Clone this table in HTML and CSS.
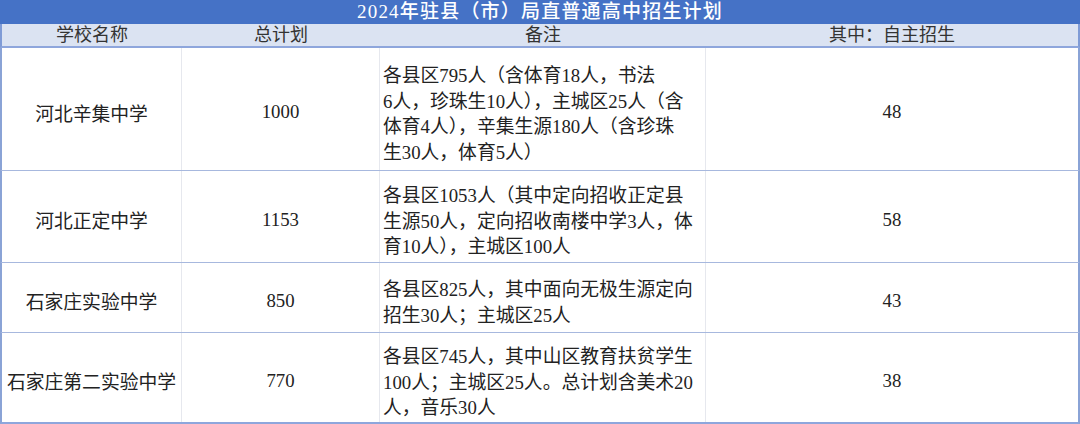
FILE: index.html
```html
<!DOCTYPE html>
<html lang="zh-CN">
<head>
<meta charset="utf-8">
<title>2024年驻县（市）局直普通高中招生计划</title>
<link rel="stylesheet" href="styles.css">
</head>
<body>
<div class="sheet">
  <div class="title">2024年驻县（市）局直普通高中招生计划</div>
  <div class="row head">
    <div class="cell c1">学校名称</div>
    <div class="cell c2">总计划</div>
    <div class="cell c3">备注</div>
    <div class="cell c4">其中：自主招生</div>
  </div>
  <div class="row r1">
    <div class="cell c1">河北辛集中学</div>
    <div class="cell c2 num">1000</div>
    <div class="cell c3 note"><span>各县区795人（含体育18人，书法</span><span>6人，珍珠生10人），主城区25人（含</span><span>体育4人），辛集生源180人（含珍珠</span><span>生30人，体育5人）</span></div>
    <div class="cell c4 num">48</div>
  </div>
  <div class="row r2">
    <div class="cell c1">河北正定中学</div>
    <div class="cell c2 num">1153</div>
    <div class="cell c3 note"><span>各县区1053人（其中定向招收正定县</span><span>生源50人，定向招收南楼中学3人，体</span><span>育10人），主城区100人</span></div>
    <div class="cell c4 num">58</div>
  </div>
  <div class="row r3">
    <div class="cell c1">石家庄实验中学</div>
    <div class="cell c2 num">850</div>
    <div class="cell c3 note"><span>各县区825人，其中面向无极生源定向</span><span>招生30人；主城区25人</span></div>
    <div class="cell c4 num">43</div>
  </div>
  <div class="row r4">
    <div class="cell c1">石家庄第二实验中学</div>
    <div class="cell c2 num">770</div>
    <div class="cell c3 note"><span>各县区745人，其中山区教育扶贫学生</span><span>100人；主城区25人。总计划含美术20</span><span>人，音乐30人</span></div>
    <div class="cell c4 num">38</div>
  </div>
</div>
</body>
</html>
```

FILE: styles.css
```css
html, body {
  margin: 0;
  padding: 0;
  background: #ffffff;
}

.sheet {
  width: 1080px;
  height: 424px;
  display: flex;
  flex-direction: column;
  font-family: "Liberation Serif", "Noto Sans CJK SC", serif;
  color: #222222;
  overflow: hidden;
}

.title {
  height: 24px;
  background: #4572c6;
  color: #ffffff;
  font-size: 19px;
  letter-spacing: 1.2px;
  line-height: 24px;
  text-align: center;
  font-weight: 500;
  box-sizing: border-box;
}

.row {
  display: grid;
  grid-template-columns: 180px 198px 326px 372px;
  box-sizing: border-box;
  border-left: 2px solid #8aa3d6;
  border-right: 2px solid #8aa3d6;
  border-bottom: 1.5px solid #a7b8de;
}

.head {
  height: 24px;
  background: #dbe3f2;
  border-left-color: #7f9bd6;
  border-right-color: #7f9bd6;
  border-bottom: 2px solid #8ea6dc;
}

.r1 { height: 123px; }
.r2 { height: 92px; }
.r3 { height: 70px; }
.r4 { height: 91px; border-bottom: 2px solid #8ea6dc; }

.cell {
  display: flex;
  align-items: center;
  justify-content: center;
  font-size: 18.8px;
  padding-top: 6px;
  border-right: 1px solid #e6e8ee;
  box-sizing: border-box;
  white-space: nowrap;
}

.head .cell {
  font-size: 18px;
  line-height: 22px;
  padding-top: 0;
  color: #333333;
  border-right: none;
}

.c4 { border-right: none; }

.note {
  flex-direction: column;
  align-items: flex-start;
  justify-content: center;
  padding-left: 3px;
  padding-top: 10px;
  line-height: 25.5px;
}

.note span {
  display: block;
}
```
